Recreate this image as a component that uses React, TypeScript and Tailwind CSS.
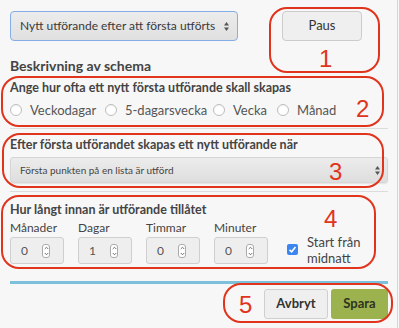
import { ChevronUp, ChevronDown } from "lucide-react";

const Updown = () => (
  <svg width="7" height="11" viewBox="0 0 7 11" className="shrink-0">
    <path d="M3.5 1 L6 4.5 H1 Z" fill="#555" />
    <path d="M3.5 10 L6 6.5 H1 Z" fill="#555" />
  </svg>
);

const Radio = ({ label }: { label: string }) => (
  <label className="flex items-center gap-[8px]">
    <span className="w-[12px] h-[12px] rounded-full border border-[#bdbdbd] bg-white shadow-[inset_0_1px_1px_rgba(0,0,0,0.06)]" />
    <span>{label}</span>
  </label>
);

const NumField = ({ label, value }: { label: string; value: string }) => (
  <div className="flex flex-col w-[54px]">
    <span className="text-[12px] leading-[17px] text-[#444]">{label}</span>
    <div className="mt-[1px] h-[27px] rounded-[3px] border border-[#cfcfcf] bg-[#eeeeee] flex items-center pl-[10px] pr-[13px] justify-between">
      <span className="text-[12px] text-[#555]">{value}</span>
      <span className="w-[8px] h-[14px] rounded-[3px] border border-[#aaa] bg-white flex flex-col items-center justify-center">
        <ChevronUp size={7} strokeWidth={3} color="#444" />
        <ChevronDown size={7} strokeWidth={3} color="#444" />
      </span>
    </div>
  </div>
);

const Note = ({ n, className, numClass }: { n: string; className: string; numClass: string }) => (
  <div className={`absolute border-2 border-[#e0341c] rounded-[18px] ${className}`}>
    <span className={`absolute text-[#e0341c] text-[24px] leading-none font-light ${numClass}`} style={{ fontFamily: '"Liberation Sans", sans-serif' }}>
      {n}
    </span>
  </div>
);

export default function App() {
  return (
    <div
      className="relative w-[399px] h-[328px] bg-[#f7f7f7] text-[#444] overflow-hidden"
      style={{ fontFamily: "Lato, 'Open Sans', sans-serif" }}
    >
      <div className="absolute top-0 bottom-0 left-[397px] w-[1px] bg-[#d6d6d6]" />
      <div className="w-[388px] pl-[10px]">
        <div className="flex pt-[11px]">
          <div className="w-[228px] h-[30px] rounded-[4px] border border-[#86aee6] bg-gradient-to-b from-[#ececec] to-[#e0e0e0] flex items-center justify-between pl-[9px] pr-[7px]">
            <span className="text-[12px] text-[#3a3a3a] whitespace-nowrap">Nytt utförande efter att första utförts</span>
            <Updown />
          </div>
          <button className="ml-[44px] w-[80px] h-[30px] rounded-[4px] border border-[#cccccc] bg-[#efefef] text-[13px] text-[#333]">
            Paus
          </button>
        </div>

        <div className="mt-[17px] text-[14px] leading-[15px] font-bold text-[#444]">Beskrivning av schema</div>
        <div className="mt-[7px] text-[12.5px] leading-[15px] font-bold text-[#444]">
          Ange hur ofta ett nytt första utförande skall skapas
        </div>
        <div className="mt-[6px] flex text-[13px] leading-[18px] text-[#555]">
          <div className="w-[95px]"><Radio label="Veckodagar" /></div>
          <div className="w-[108px]"><Radio label="5-dagarsvecka" /></div>
          <div className="w-[64px]"><Radio label="Vecka" /></div>
          <Radio label="Månad" />
        </div>
        <div className="mt-[9px] h-[1px] bg-[#dcdcdc]" />

        <div className="mt-[8px] text-[12.5px] leading-[15px] font-bold text-[#444]">
          Efter första utförandet skapas ett nytt utförande när
        </div>
        <div className="mt-[5px] h-[26px] rounded-[3px] border border-[#d6d6d6] bg-gradient-to-b from-[#ececec] to-[#dedede] flex items-center justify-between pl-[9px] pr-[6px] shadow-[0_1px_1px_rgba(0,0,0,0.08)]">
          <span className="text-[10px] text-[#444]">Första punkten på en lista är utförd</span>
          <Updown />
        </div>
        <div className="mt-[8px] h-[1px] bg-[#dcdcdc]" />

        <div className="mt-[10px] text-[12.5px] leading-[15px] font-bold text-[#444]">Hur långt innan är utförande tillåtet</div>
        <div className="mt-[2px] flex items-start gap-[14px]">
          <NumField label="Månader" value="0" />
          <NumField label="Dagar" value="1" />
          <NumField label="Timmar" value="0" />
          <NumField label="Minuter" value="0" />
          <div className="ml-[5px] mt-[15px] flex items-start gap-[9px]">
            <span className="mt-[10px] w-[11px] h-[11px] rounded-[2px] bg-[#3b86f0] flex items-center justify-center">
              <svg width="9" height="9" viewBox="0 0 9 9">
                <path d="M1.5 4.8 L3.6 6.8 L7.5 2" stroke="white" strokeWidth="1.6" fill="none" />
              </svg>
            </span>
            <span className="text-[13px] leading-[16px] text-[#444]">
              Start från
              <br />
              midnatt
            </span>
          </div>
        </div>

        <div className="mt-[15px] h-[3px] bg-[#7cc0dc]" />
        <div className="mt-[5px] flex justify-end gap-[3px]">
          <button className="w-[64px] h-[30px] rounded-[3px] border border-[#cfcfcf] bg-[#efefef] text-[13px] font-bold text-[#333]">
            Avbryt
          </button>
          <button className="w-[57px] h-[30px] rounded-[3px] bg-[#9bb24e] text-[13px] font-bold text-[#2f3320]">
            Spara
          </button>
        </div>
      </div>

      <Note n="1" className="left-[269px] top-[7px] w-[111px] h-[66px]" numClass="left-[48px] top-[38px]" />
      <Note n="2" className="left-[1px] top-[76px] w-[383px] h-[51px]" numClass="left-[353px] top-[19px]" />
      <Note n="3" className="left-[2px] top-[133px] w-[382px] h-[55px]" numClass="left-[325px] top-[25px]" />
      <Note n="4" className="left-[1px] top-[195px] w-[375px] h-[74px]" numClass="left-[321px] top-[10px]" />
      <Note n="5" className="left-[223px] top-[283px] w-[170px] h-[40px]" numClass="left-[14px] top-[8px]" />
    </div>
  );
}
